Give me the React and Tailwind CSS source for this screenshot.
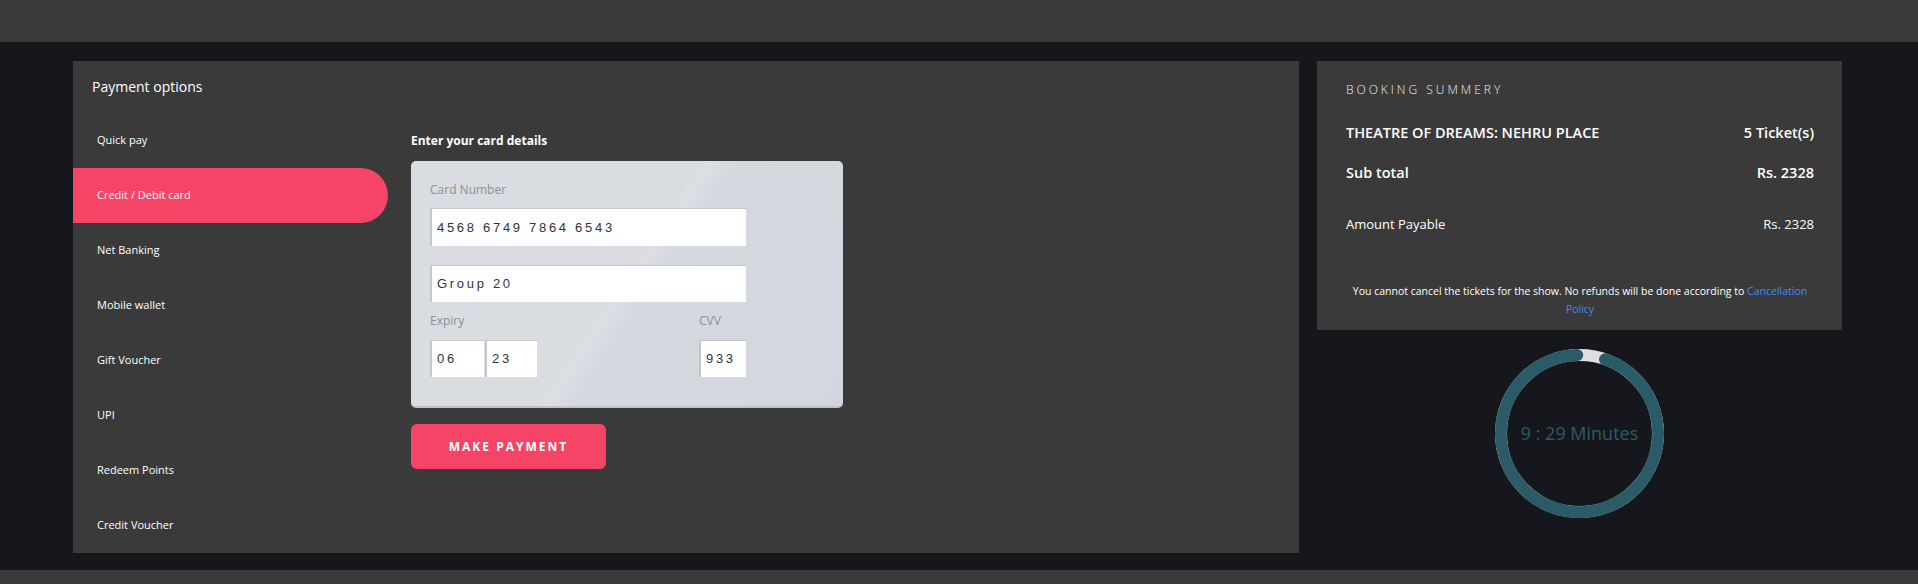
const menu = [
  'Quick pay',
  'Credit / Debit card',
  'Net Banking',
  'Mobile wallet',
  'Gift Voucher',
  'UPI',
  'Redeem Points',
  'Credit Voucher',
];

function CardInput({ value, className }) {
  return (
    <div
      className={`flex items-center border-t border-l-2 border-[#c4c7cc] bg-white pl-[5px] font-['Liberation_Sans',Arial,sans-serif] text-[13px] tracking-[2.7px] text-[#333] ${className}`}
    >
      {value}
    </div>
  );
}

function Timer() {
  const r = 78.5;
  const c = 2 * Math.PI * r;
  const progress = 0.941;
  return (
    <div className="relative h-[169px] w-[169px]">
      <svg width="169" height="169" viewBox="0 0 169 169" className="absolute inset-0">
        <circle cx="84.5" cy="84.5" r={r} fill="none" stroke="#dedede" strokeWidth="12" />
        <circle
          cx="84.5"
          cy="84.5"
          r={r}
          fill="none"
          stroke="#2a5b66"
          strokeWidth="12"
          strokeLinecap="round"
          strokeDasharray={`${c * progress} ${c}`}
          transform="rotate(-71 84.5 84.5)"
        />
      </svg>
      <div className="absolute inset-0 flex items-center justify-center text-[18px] text-[#2a5b66]">
        9 : 29 Minutes
      </div>
    </div>
  );
}

export default function App() {
  return (
    <div className="flex h-[584px] flex-col bg-[#16171c] font-['Open_Sans',sans-serif] text-white">
      <header className="h-[42px] shrink-0 bg-[#3a3a3a]" />

      <main className="flex gap-[18px] pl-[73px] pt-[19px]">
        <section className="h-[492px] w-[1226px] bg-[#3a3a3a]">
          <h2 className="pl-[19px] pt-[16px] text-[14px] leading-[20px]">Payment options</h2>
          <div className="mt-[16px] flex">
            <nav className="w-[315px]">
              {menu.map((item, i) => (
                <div
                  key={item}
                  className={`flex h-[55px] items-center pl-[24px] text-[11px] ${
                    i === 1 ? 'rounded-r-[28px] bg-[#f64466]' : ''
                  }`}
                >
                  {item}
                </div>
              ))}
            </nav>

            <div className="ml-[23px] mt-[19px]">
              <h3 className="text-[12px] font-bold leading-[18px]">Enter your card details</h3>
              <div className="mt-[11px] h-[247px] w-[432px] rounded-[5px] border-b-2 border-[#bfc3ca] bg-[linear-gradient(124deg,#d9dce1_0%,#d9dce1_49%,#dcdfe3_50%,#d4d8df_55%,#d2d6de_100%)] pl-[19px] pt-[20px]">
                <div className="text-[12px] leading-[18px] text-[#8d9095]">Card Number</div>
                <CardInput value="4568 6749 7864 6543" className="mt-[9px] h-[38px] w-[316px]" />
                <CardInput value="Group 20" className="mt-[19px] h-[37px] w-[316px]" />
                <div className="mt-[10px] flex w-[316px] justify-between">
                  <div>
                    <div className="text-[12px] leading-[18px] text-[#8d9095]">Expiry</div>
                    <div className="mt-[10px] flex gap-[1px]">
                      <CardInput value="06" className="h-[37px] w-[54px]" />
                      <CardInput value="23" className="h-[37px] w-[52px]" />
                    </div>
                  </div>
                  <div>
                    <div className="text-[12px] leading-[18px] text-[#8d9095]">CVV</div>
                    <CardInput value="933" className="mt-[10px] h-[37px] w-[47px]" />
                  </div>
                </div>
              </div>
              <button className="mt-[16px] flex h-[45px] w-[195px] items-center justify-center rounded-[6px] bg-[#f64466] text-[12px] font-bold tracking-[2px] text-white">
                MAKE PAYMENT
              </button>
            </div>
          </div>
        </section>

        <aside className="flex w-[525px] flex-col items-center">
          <div className="h-[269px] w-full bg-[#3a3a3a] pl-[29px] pr-[28px] pt-[21px]">
            <div className="text-[12px] font-light leading-[16px] tracking-[3px] text-[#eeeeee]">BOOKING SUMMERY</div>
            <div className="mt-[26px] flex justify-between text-[14.5px] font-semibold leading-[18px]">
              <span>THEATRE OF DREAMS: NEHRU PLACE</span>
              <span>5 Ticket(s)</span>
            </div>
            <div className="mt-[21px] flex justify-between text-[14.5px] font-semibold leading-[20px]">
              <span>Sub total</span>
              <span>Rs. 2328</span>
            </div>
            <div className="mt-[32px] flex justify-between text-[13px] leading-[18px]">
              <span>Amount Payable</span>
              <span>Rs. 2328</span>
            </div>
            <div className="mt-[49px] text-center text-[10.5px] leading-[18px]">
              <p>
                You cannot cancel the tickets for the show. No refunds will be done according to{' '}
                <span className="text-[#3d8bfd]">Cancellation</span>
              </p>
              <p className="text-[#3d8bfd]">Policy</p>
            </div>
          </div>
          <div className="mt-[19px]">
            <Timer />
          </div>
        </aside>
      </main>

      <footer className="mt-auto h-[14px] shrink-0 bg-[#3a3a3a]" />
    </div>
  );
}
